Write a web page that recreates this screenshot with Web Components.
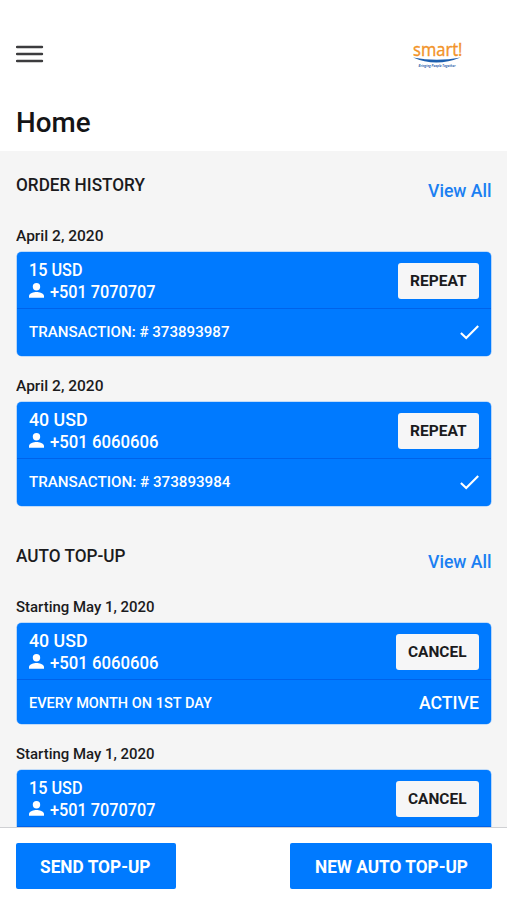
<!DOCTYPE html>
<html lang="en">
<head>
<meta charset="utf-8">
<title>Home</title>
<style>
html, body { margin: 0; height: 100%; overflow: hidden; }
body { font-family: Roboto, "Liberation Sans", sans-serif; color: #1b1b1d; background: #fff; }
</style>
</head>
<body>
<topup-app></topup-app>
<script>
const define = (name, html, setup) => {
  const tpl = document.createElement('template');
  tpl.innerHTML = html;
  customElements.define(name, class extends HTMLElement {
    connectedCallback() {
      if (this.shadowRoot) return;
      this.attachShadow({ mode: 'open' }).append(tpl.content.cloneNode(true));
      if (setup) setup(this, this.shadowRoot);
    }
  });
};

/* A single line of text, condensed or spread to the width in its "w" attribute. */
define('fit-text', `<style>
  :host { display: block; white-space: nowrap; flex: none; }
  span { display: inline-block; transform-origin: 0 50%; }
</style><span></span>`, (el, root) => {
  const span = root.querySelector('span');
  span.textContent = el.getAttribute('t');
  const w = parseFloat(el.getAttribute('w'));
  el.style.width = w + 'px';
  span.style.transform = 'scaleX(' + w / span.getBoundingClientRect().width + ')';
});

define('menu-icon', `<style>:host { display: block; width: 28px; height: 18px; } svg { display: block; }</style>
<svg width="28" height="18" viewBox="0 0 28 18" stroke="#3c3c3e" stroke-width="2.4" stroke-linecap="round"><path d="M1 2H26M1 9H26M1 16H26"/></svg>`);

define('smart-logo', `<style>:host { display: block; width: 50px; height: 30px; } svg { display: block; overflow: visible; }</style>
<svg width="50" height="30" viewBox="0 0 50 30">
  <text x="0" y="15.2" font-family="Open Sans, sans-serif" font-size="18.5" fill="#f29327" stroke="#f29327" stroke-width=".4" textLength="49.5" lengthAdjust="spacingAndGlyphs">smart!</text>
  <path d="M0 16.4Q23 26.5 47.5 16.4Q24 21.3 0 16.4Z" fill="#1d5fae"/>
  <text x="5.5" y="26" font-family="Open Sans, sans-serif" font-size="3.8" font-style="italic" font-weight="700" fill="#3769b0" textLength="37" lengthAdjust="spacingAndGlyphs">Bringing People Together</text>
</svg>`);

define('person-icon', `<style>:host { display: block; width: 15px; height: 15px; margin-top: 2px; } svg { display: block; }</style>
<svg width="15" height="15" viewBox="0 0 15 15" fill="#fff"><circle cx="7.5" cy="3.8" r="3.7"/><path d="M0 14.8V12.9C0 10.2 5 8.9 7.5 8.9S15 10.2 15 12.9V14.8Z"/></svg>`);

define('check-icon', `<style>:host { display: block; width: 19px; height: 15px; } svg { display: block; }</style>
<svg width="19" height="15" viewBox="0 0 19 15" fill="none" stroke="#fff" stroke-width="2.1"><path d="M.9 8L6.2 13.1L18.2 1.1"/></svg>`);

define('page-header', `<style>
  :host { display: block; height: 151px; box-sizing: border-box; padding: 41px 16px 0; background: #fff; }
  .bar { display: flex; justify-content: space-between; align-items: flex-start; height: 65px; padding-right: 28px; }
  menu-icon { margin-top: 4px; }
  h1 { margin: 0; font-size: 28px; line-height: 34px; font-weight: 500; color: #141416; }
</style>
<div class="bar"><menu-icon></menu-icon><smart-logo></smart-logo></div>
<h1><fit-text t="Home" w="74.5"></fit-text></h1>`);

define('section-title', `<style>
  :host { display: flex; justify-content: space-between; height: 52px; font-size: 18px; line-height: 22px; font-weight: 500; }
  a { color: #1b7ff2; margin-top: 6px; }
</style>
<slot></slot><a><fit-text t="View All" w="63.5"></fit-text></a>`);

define('order-card', `<style>
  :host { display: block; margin-bottom: 20px; }
  .date { height: 20px; font-size: 15.5px; line-height: 20px; font-weight: 500; margin-bottom: 6px; }
  .card { margin-left: .5px; border-radius: 4.5px; background: #007aff; color: #fff; overflow: hidden; box-shadow: 0 0 0 .6px #8ec2fb; }
  .top { display: flex; justify-content: space-between; height: 57px; box-sizing: border-box; padding: 7px 12px 0 12.5px; border-bottom: 1px solid #0062ea; font-size: 17.5px; line-height: 22px; }
  .info { font-weight: 500; }
  .phone { display: flex; gap: 6px; }
  .bottom { display: flex; justify-content: space-between; align-items: center; height: var(--foot, 47px); box-sizing: border-box; padding: var(--foot-pad, 0 12px 1px 12.5px); font-size: 15.5px; line-height: 20px; font-weight: 500; }
  .button { display: flex; justify-content: center; align-items: center; height: 36px; margin-top: 4px; border-radius: 3px; background: #f6f6f7; color: #1b1b1d; font-size: 15.5px; font-weight: 700; }
</style>
<div class="date"><fit-text></fit-text></div>
<div class="card">
  <div class="top">
    <div class="info"><fit-text class="amount"></fit-text><div class="phone"><person-icon></person-icon><fit-text class="num"></fit-text></div></div>
    <div class="button"><fit-text></fit-text></div>
  </div>
  <div class="bottom"><fit-text class="note"></fit-text><slot></slot></div>
</div>`, (el, root) => {
  const put = (sel, key) => {
    const old = root.querySelector(sel);
    if (!el.hasAttribute(key)) return old.remove();
    const [t, w] = el.getAttribute(key).split('|');
    const next = document.createElement('fit-text');
    next.setAttribute('t', t);
    next.setAttribute('w', w);
    old.replaceWith(next);
  };
  root.querySelector('.button').style.width = el.getAttribute('button-width') + 'px';
  put('.date fit-text', 'date');
  put('.amount', 'amount');
  put('.num', 'phone');
  put('.button fit-text', 'action');
  put('.note', 'note');
});

define('action-button', `<style>
  :host { display: flex; align-items: center; justify-content: center; height: 46px; box-sizing: border-box; padding-top: 2px; border-radius: 2px; background: #007aff; color: #fff; font-size: 18px; line-height: 22px; font-weight: 700; }
</style><slot></slot>`);

define('topup-app', `<style>
  :host { display: flex; flex-direction: column; width: 507px; height: 900px; }
  main { flex: 1; min-height: 0; overflow: hidden; background: #f5f5f5; padding: 23px 16px 0; box-sizing: border-box; }
  section + section { margin-top: 39px; }
  section { display: flow-root; }
  section > :last-child { margin-bottom: 0; }
  .auto { --foot: 44px; --foot-pad: 2px 12px 0 12.5px; }
  .status { font-size: 17.5px; line-height: 22px; margin-top: -1px; }
  footer { flex: none; height: 73px; box-sizing: border-box; border-top: 1px solid #cfd0d3; background: #fff; padding: 14.5px 15px 0 15.5px; display: flex; justify-content: space-between; align-items: flex-start; }
</style>
<page-header></page-header>
<main>
  <section>
    <section-title><fit-text t="ORDER HISTORY" w="129"></fit-text></section-title>
    <order-card date="April 2, 2020|87.5" amount="15 USD|53.5" phone="+501 7070707|105.5" action="REPEAT|56.5" button-width="81" note="TRANSACTION: # 373893987|200.5"><check-icon></check-icon></order-card>
    <order-card date="April 2, 2020|87.5" amount="40 USD|58.5" phone="+501 6060606|108.5" action="REPEAT|56.5" button-width="81" note="TRANSACTION: # 373893984|201.5"><check-icon></check-icon></order-card>
  </section>
  <section class="auto">
    <section-title><fit-text t="AUTO TOP-UP" w="109.5"></fit-text></section-title>
    <order-card date="Starting May 1, 2020|138.5" amount="40 USD|58.5" phone="+501 6060606|108.5" action="CANCEL|58.5" button-width="83" note="EVERY MONTH ON 1ST DAY|183"><fit-text class="status" t="ACTIVE" w="60"></fit-text></order-card>
    <order-card date="Starting May 1, 2020|138.5" amount="15 USD|53.5" phone="+501 7070707|105.5" action="CANCEL|58.5" button-width="83"></order-card>
  </section>
</main>
<footer>
  <action-button style="width:160px"><fit-text t="SEND TOP-UP" w="110.5"></fit-text></action-button>
  <action-button style="width:202px"><fit-text t="NEW AUTO TOP-UP" w="153"></fit-text></action-button>
</footer>`);
</script>
</body>
</html>
